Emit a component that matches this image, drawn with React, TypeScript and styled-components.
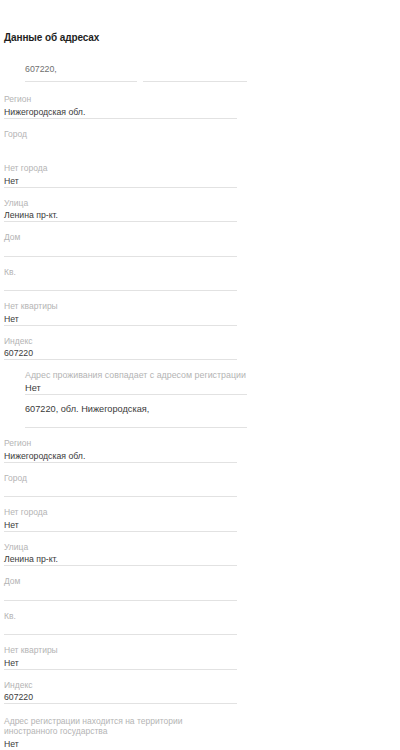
import React from 'react';
import styled, { createGlobalStyle } from 'styled-components';

const GlobalStyle = createGlobalStyle`
	html, body {
		margin: 0;
		padding: 0;
		background: #ffffff;
	}
	body {
		font-family: 'Liberation Sans', Arial, sans-serif;
		-webkit-font-smoothing: antialiased;
	}
`;

const Page = styled.div`
	width: 400px;
	padding: 31px 0 0 4px;
	box-sizing: border-box;
`;

const Title = styled.h2`
	margin: 0;
	font-size: 10px;
	line-height: 14px;
	font-weight: 700;
	color: #1e1e1e;
	letter-spacing: -0.1px;
`;

const SummaryRow = styled.div`
	display: flex;
	gap: 6px;
	margin: 18px 0 0 21px;
`;

const SummaryCell = styled.div<{ $width: number }>`
	width: ${({ $width }) => $width}px;
	height: 18px;
	border-bottom: 1px solid #e2e2e2;
	font-size: 8.8px;
	line-height: 12px;
	color: #707070;
`;

const Section = styled.div<{ $first?: boolean }>`
	display: flex;
	flex-direction: column;
	gap: 8.5px;
	margin-top: ${({ $first }) => ($first ? '10.5px' : '8.5px')};
`;

const Field = styled.div<{ $indent?: boolean; $noLine?: boolean }>`
	width: ${({ $indent }) => ($indent ? '222px' : '233px')};
	margin-left: ${({ $indent }) => ($indent ? '21px' : '0')};
	border-bottom: 1px solid ${({ $noLine }) => ($noLine ? 'transparent' : '#e2e2e2')};
`;

const Label = styled.div<{ $large?: boolean; $offset?: number }>`
	padding: ${({ $offset = 1.5 }) => `${$offset}px 0 1.5px`};
	font-size: ${({ $large }) => ($large ? '8.85px' : '8.5px')};
	line-height: 10px;
	color: #b4b4b4;
	white-space: nowrap;
`;

const Value = styled.div<{ $tall?: boolean; $large?: boolean }>`
	min-height: ${({ $tall }) => ($tall ? '24px' : '12px')};
	font-size: ${({ $large }) => ($large ? '9.2px' : '8.7px')};
	line-height: 12px;
	color: #3a3a3a;
`;

type Item = { label: string; value?: string; noLine?: boolean };

const addressFields = (firstCityLine: boolean): Item[] => [
	{ label: 'Регион', value: 'Нижегородская обл.' },
	{ label: 'Город', noLine: !firstCityLine },
	{ label: 'Нет города', value: 'Нет' },
	{ label: 'Улица', value: 'Ленина пр-кт.' },
	{ label: 'Дом' },
	{ label: 'Кв.' },
	{ label: 'Нет квартиры', value: 'Нет' },
	{ label: 'Индекс', value: '607220' },
];

const App = () => {
	return (
		<>
			<GlobalStyle />
			<Page>
				<Title>Данные об адресах</Title>

				<SummaryRow>
					<SummaryCell $width={112}>607220,</SummaryCell>
					<SummaryCell $width={104} />
				</SummaryRow>

				<Section $first>
					{addressFields(false).map(f => (
						<Field key={f.label} $noLine={f.noLine}>
							<Label>{f.label}</Label>
							<Value>{f.value}</Value>
						</Field>
					))}
					<Field $indent>
						<Label $large>Адрес проживания совпадает с адресом регистрации</Label>
						<Value $large>Нет</Value>
					</Field>
					<Field $indent>
						<Value $tall $large>607220, обл. Нижегородская,</Value>
					</Field>
				</Section>

				<Section>
					{addressFields(true).map(f => (
						<Field key={f.label}>
							<Label>{f.label}</Label>
							<Value>{f.value}</Value>
						</Field>
					))}
					<Field>
						<Label $offset={3.5}>
							Адрес регистрации находится на территории
							<br />
							иностранного государства
						</Label>
						<Value>Нет</Value>
					</Field>
				</Section>
			</Page>
		</>
	);
};

export default App;
